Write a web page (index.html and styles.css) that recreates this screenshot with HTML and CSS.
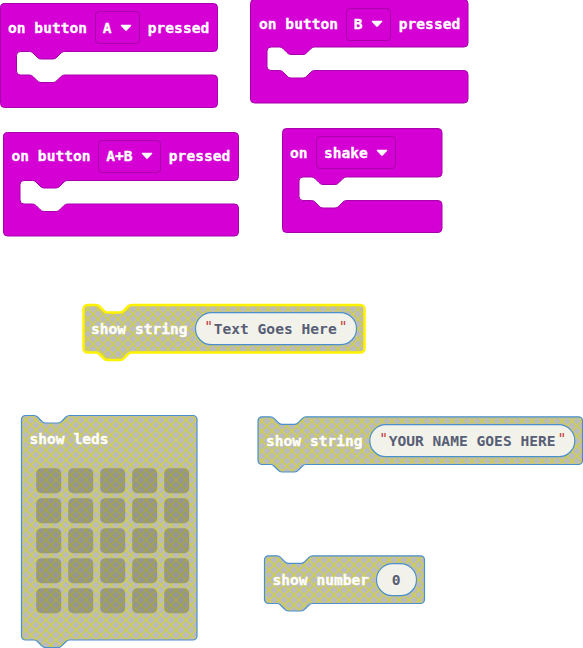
FILE: index.html
```html
<!DOCTYPE html>
<html lang="en">
<head>
<meta charset="utf-8">
<title>Blocks workspace</title>
<link rel="stylesheet" href="styles.css">
</head>
<body>
<svg class="defs" width="0" height="0" aria-hidden="true">
  <defs>
    <pattern id="hatch" width="10" height="10" patternUnits="userSpaceOnUse">
      <rect width="10" height="10" fill="#bbb"/>
      <path d="M-1 -1L11 11M11 -1L-1 11" stroke="#d0d046" stroke-width="1.3"/>
    </pattern>
    <pattern id="veil" width="10" height="10" patternUnits="userSpaceOnUse">
      <rect width="10" height="10" fill="#f1f1ef"/>
      <path d="M-1 -1L11 11M11 -1L-1 11" stroke="#f4f4e2" stroke-width="1.3"/>
    </pattern>
    <pattern id="led" width="10" height="10" patternUnits="userSpaceOnUse">
      <rect width="10" height="10" fill="#959591"/>
      <path d="M-1 -1L11 11M11 -1L-1 11" stroke="#a5a541" stroke-width="1.3"/>
    </pattern>
  </defs>
</svg>
<main class="workspace">

  <section class="block event button-a">
    <svg class="shape" width="220" height="106"><path d="M4 .5H213.500a4 4 0 0 1 4 4V44.500a4 4 0 0 1-4 4H64.500q-2 0-3.500 1.500l-4 4q-1.500 2-4 2H41q-2.500 0-4-2l-4-4q-1.500-1.500-3.500-1.500H20.500a4 4 0 0 0-4 4V68a4 4 0 0 0 4 4H29.500q2 0 3.500 1.500l4 4q1.500 2 4 2H53q2.500 0 4-2l4-4q1.500-1.500 3.500-1.500H213.500a4 4 0 0 1 4 4V100.500a4 4 0 0 1-4 4H4.500a4 4 0 0 1-4-4V4.500a4 4 0 0 1 4-4z"/></svg>
    <div class="row"><span>on button</span><span class="dropdown">A<svg class="caret" width="12" height="8"><path d="M1.200 .8H10.800Q11.800 1 11 2L6.800 6.500Q6 7.200 5.200 6.500L1 2Q.2 1 1.200 .8z"/></svg></span><span>pressed</span></div>
  </section>

  <section class="block event button-b">
    <svg class="shape" width="220" height="106"><path d="M4.500 .5H214a4 4 0 0 1 4 4V44a4 4 0 0 1-4 4H64.500q-2 0-3.500 1.500l-4 4q-1.500 2-4 2H41q-2.500 0-4-2l-4-4q-1.500-1.500-3.500-1.500H21a4 4 0 0 0-4 4V67.500a4 4 0 0 0 4 4H29.500q2 0 3.500 1.500l4 4q1.500 2 4 2H53q2.500 0 4-2l4-4q1.500-1.500 3.500-1.500H214a4 4 0 0 1 4 4V100a4 4 0 0 1-4 4H4.500a4 4 0 0 1-4-4V4.500a4 4 0 0 1 4-4z"/></svg>
    <div class="row"><span>on button</span><span class="dropdown">B<svg class="caret" width="12" height="8"><path d="M1.200 .8H10.800Q11.800 1 11 2L6.800 6.500Q6 7.200 5.200 6.500L1 2Q.2 1 1.200 .8z"/></svg></span><span>pressed</span></div>
  </section>

  <section class="block event button-ab">
    <svg class="shape" width="238" height="106"><path d="M4.500 .5H231.500a4 4 0 0 1 4 4V44.500a4 4 0 0 1-4 4H64.500q-2 0-3.500 1.500l-4 4q-1.500 2-4 2H41q-2.500 0-4-2l-4-4q-1.500-1.500-3.500-1.500H21a4 4 0 0 0-4 4V68a4 4 0 0 0 4 4H29.500q2 0 3.500 1.500l4 4q1.500 2 4 2H53q2.500 0 4-2l4-4q1.500-1.500 3.500-1.500H231.500a4 4 0 0 1 4 4V100a4 4 0 0 1-4 4H4.500a4 4 0 0 1-4-4V4.500a4 4 0 0 1 4-4z"/></svg>
    <div class="row"><span>on button</span><span class="dropdown">A+B<svg class="caret" width="12" height="8"><path d="M1.200 .8H10.800Q11.800 1 11 2L6.800 6.500Q6 7.200 5.200 6.500L1 2Q.2 1 1.200 .8z"/></svg></span><span>pressed</span></div>
  </section>

  <section class="block event on-shake">
    <svg class="shape" width="162" height="106"><path d="M4 .5H156a4 4 0 0 1 4 4V45a4 4 0 0 1-4 4H64.500q-2 0-3.500 1.500l-4 4q-1.500 2-4 2H41q-2.500 0-4-2l-4-4q-1.500-1.500-3.500-1.500H21a4 4 0 0 0-4 4V68.500a4 4 0 0 0 4 4H29.500q2 0 3.500 1.500l4 4q1.500 2 4 2H53q2.500 0 4-2l4-4q1.500-1.500 3.500-1.500H156a4 4 0 0 1 4 4V100.500a4 4 0 0 1-4 4H4.500a4 4 0 0 1-4-4V4.500a4 4 0 0 1 4-4z"/></svg>
    <div class="row"><span>on</span><span class="dropdown">shake<svg class="caret" width="12" height="8"><path d="M1.200 .8H10.800Q11.800 1 11 2L6.800 6.500Q6 7.200 5.200 6.500L1 2Q.2 1 1.200 .8z"/></svg></span></div>
  </section>

  <section class="block disabled selected string-one">
    <svg class="shape" width="285" height="58"><path d="M4.500 1H13q2 0 3.500 1.500l4 4q1.500 2 4 2H37q2.500 0 4-2l4-4q1.500-1.500 3.500-1.500H277.500a4 4 0 0 1 4 4V44.500a4 4 0 0 1-4 4H48.500q-2 0-3.500 1.500l-4 4q-1.500 2-4 2H24.500q-2.500 0-4-2l-4-4q-1.500-1.500-3.500-1.500H4.500a4 4 0 0 1-4-4V5a4 4 0 0 1 4-4z"/><rect class="field" x="112.500" y="8.700" width="161" height="32" rx="16"/></svg>
    <div class="row"><span>show string</span><span class="value"><i>"</i>Text Goes Here<i class="close">"</i></span></div>
  </section>

  <section class="block disabled leds">
    <svg class="shape" width="178" height="234"><path d="M4.500 .5H13q2 0 3.500 1.500l4 4q1.500 2 4 2H37q2.500 0 4-2l4-4q1.500-1.500 3.500-1.500H172a4 4 0 0 1 4 4V221a4 4 0 0 1-4 4H48.500q-2 0-3.500 1.500l-4 4q-1.500 2-4 2H24.500q-2.500 0-4-2l-4-4q-1.500-1.500-3.500-1.500H4.500a4 4 0 0 1-4-4V4.500a4 4 0 0 1 4-4z"/>
      <g class="cells">
        <rect x="15.200" y="53.300" width="25" height="25" rx="5"/><rect x="47.200" y="53.300" width="25" height="25" rx="5"/><rect x="79.200" y="53.300" width="25" height="25" rx="5"/><rect x="111.200" y="53.300" width="25" height="25" rx="5"/><rect x="143.200" y="53.300" width="25" height="25" rx="5"/>
        <rect x="15.200" y="83.300" width="25" height="25" rx="5"/><rect x="47.200" y="83.300" width="25" height="25" rx="5"/><rect x="79.200" y="83.300" width="25" height="25" rx="5"/><rect x="111.200" y="83.300" width="25" height="25" rx="5"/><rect x="143.200" y="83.300" width="25" height="25" rx="5"/>
        <rect x="15.200" y="113.300" width="25" height="25" rx="5"/><rect x="47.200" y="113.300" width="25" height="25" rx="5"/><rect x="79.200" y="113.300" width="25" height="25" rx="5"/><rect x="111.200" y="113.300" width="25" height="25" rx="5"/><rect x="143.200" y="113.300" width="25" height="25" rx="5"/>
        <rect x="15.200" y="143.300" width="25" height="25" rx="5"/><rect x="47.200" y="143.300" width="25" height="25" rx="5"/><rect x="79.200" y="143.300" width="25" height="25" rx="5"/><rect x="111.200" y="143.300" width="25" height="25" rx="5"/><rect x="143.200" y="143.300" width="25" height="25" rx="5"/>
        <rect x="15.200" y="173.300" width="25" height="25" rx="5"/><rect x="47.200" y="173.300" width="25" height="25" rx="5"/><rect x="79.200" y="173.300" width="25" height="25" rx="5"/><rect x="111.200" y="173.300" width="25" height="25" rx="5"/><rect x="143.200" y="173.300" width="25" height="25" rx="5"/>
      </g></svg>
    <div class="row"><span>show leds</span></div>
  </section>

  <section class="block disabled string-two">
    <svg class="shape" width="327" height="58"><path d="M5 .8H13.500q2 0 3.500 1.500l4 4q1.500 2 4 2H37.500q2.500 0 4-2l4-4q1.500-1.500 3.500-1.500H321.500a4 4 0 0 1 4 4V44.500a4 4 0 0 1-4 4H49q-2 0-3.500 1.500l-4 4q-1.500 2-4 2H25q-2.500 0-4-2l-4-4q-1.500-1.500-3.500-1.500H5a4 4 0 0 1-4-4V4.800a4 4 0 0 1 4-4z"/><rect class="field" x="112.800" y="8.700" width="205" height="32" rx="16"/></svg>
    <div class="row"><span>show string</span><span class="value"><i>"</i>YOUR NAME GOES HERE<i class="close">"</i></span></div>
  </section>

  <section class="block disabled number">
    <svg class="shape" width="163" height="58"><path d="M4.500 .8H13q2 0 3.500 1.500l4 4q1.500 2 4 2H37q2.500 0 4-2l4-4q1.500-1.500 3.500-1.500H156.500a4 4 0 0 1 4 4V44.500a4 4 0 0 1-4 4H48.500q-2 0-3.500 1.500l-4 4q-1.500 2-4 2H24.500q-2.500 0-4-2l-4-4q-1.500-1.500-3.500-1.500H4.500a4 4 0 0 1-4-4V4.800a4 4 0 0 1 4-4z"/><rect class="field" x="112.500" y="8.700" width="40" height="32" rx="16"/></svg>
    <div class="row"><span>show number</span><span class="value digit">0</span></div>
  </section>

</main>
</body>
</html>
```
FILE: styles.css
```css
body { margin: 0; background: #fff; }
.defs { position: absolute; }
.workspace {
  position: relative;
  width: 583px;
  height: 648px;
  overflow: hidden;
  font: bold 14.6px/16px "DejaVu Sans Mono", monospace;
  color: #fff;
}
/* Blocks sit at free positions on the canvas. */
.block { position: absolute; }
.shape { position: absolute; left: 0; top: 0; overflow: visible; }
.row {
  position: relative;
  display: flex;
  align-items: center;
  height: 49px;
  padding-left: 8px;
  gap: 7.7px;
  white-space: pre;
  -webkit-text-stroke: 0.3px currentColor;
}
.event .shape { fill: #d400d4; stroke: #a600aa; stroke-width: 1; }
.event .caret { fill: #fff; stroke: none; }
.dropdown {
  display: flex;
  align-items: center;
  gap: 8.5px;
  height: 33px;
  padding: 0 7px;
  box-sizing: border-box;
  border: 1px solid #aa00aa;
  border-radius: 4px;
}
.disabled .shape { fill: url(#hatch); stroke: #4a90cf; stroke-width: 1.2; }
.disabled .shape .field { fill: url(#veil); }
.disabled .cells { fill: url(#led); stroke: none; }
.selected .shape > path { stroke: #fff200; stroke-width: 2.5; }
.disabled .row { gap: 0; padding-left: 8.5px; height: 50px; }
.leds .row { height: 48px; }
.value { margin-left: 16.500px; color: #575e75; -webkit-text-stroke: 0; }
.value i {
  display: inline-block;
  width: 9.5px;
  font-style: normal;
  font-weight: normal;
  color: #c23b3b;
  vertical-align: 3px;
  line-height: 10px;
}
.value .close { margin-left: 2px; }
.value.digit { margin-left: 22.500px; }

.button-a { left: 0; top: 3px; }
.button-b { left: 250px; top: -0.500px; }
.button-b .row { padding-left: 9px; }
.button-b .shape { top: -0.500px; }
.button-ab { left: 3px; top: 131.500px; }
.button-ab .row { padding-left: 8.500px; }
.on-shake { left: 282px; top: 128px; }
.on-shake .row { gap: 8.300px; }
.string-one { left: 82.500px; top: 304px; }
.leds { left: 21px; top: 415px; }
.string-two { left: 257px; top: 416px; }
.string-two .row { padding-left: 9px; }
.number { left: 264px; top: 555px; }
```
